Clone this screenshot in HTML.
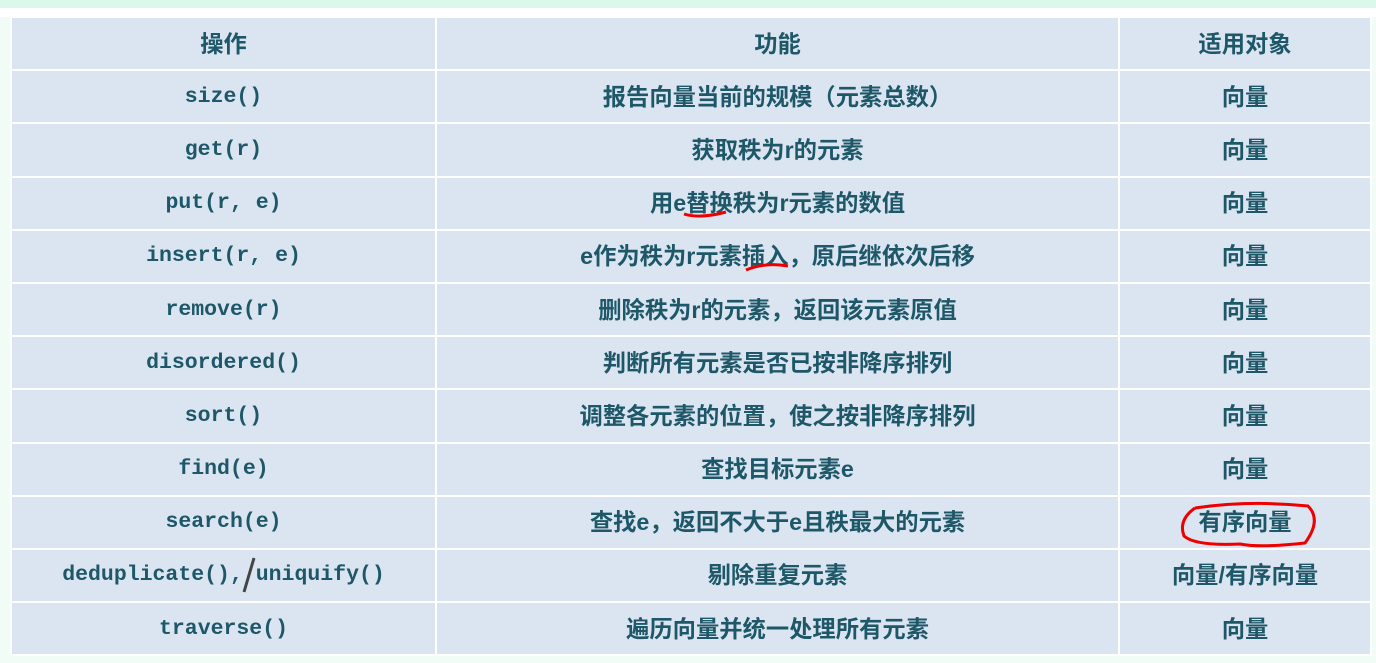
<!DOCTYPE html>
<html><head><meta charset="utf-8"><style>
body{margin:0;width:1376px;height:663px;background:#f2fcf7;position:relative;overflow:hidden;font-family:"Liberation Sans","Noto Sans CJK SC",sans-serif}
.top{position:absolute;left:0;top:0;width:1376px;height:8px;background:#dcf8ec}
.wh{position:absolute;left:0;top:8px;width:1376px;height:9px;background:#fff}
table{position:absolute;left:10px;top:16px;border-collapse:collapse;width:1362px;table-layout:fixed}
td{background:#dbe5f1;border:2px solid #fff;text-align:center;vertical-align:middle;color:#1e5868;font-weight:bold;font-size:23.3px;height:53.2px;line-height:24px;padding:0;box-sizing:border-box;white-space:nowrap}
td.m{font-family:"Liberation Mono","Noto Sans CJK SC",monospace;font-size:21.5px}
svg{position:absolute;left:0;top:0}
</style></head><body>
<div class="top"></div><div class="wh"></div>
<table>
<colgroup><col style="width:425px"><col style="width:683px"><col></colgroup>
<tr><td>操作</td><td>功能</td><td>适用对象</td></tr>
<tr><td class="m">size()</td><td>报告向量当前的规模（元素总数）</td><td>向量</td></tr>
<tr><td class="m">get(r)</td><td>获取秩为r的元素</td><td>向量</td></tr>
<tr><td class="m">put(r, e)</td><td>用e替换秩为r元素的数值</td><td>向量</td></tr>
<tr><td class="m">insert(r, e)</td><td>e作为秩为r元素插入，原后继依次后移</td><td>向量</td></tr>
<tr><td class="m">remove(r)</td><td>删除秩为r的元素，返回该元素原值</td><td>向量</td></tr>
<tr><td class="m">disordered()</td><td>判断所有元素是否已按非降序排列</td><td>向量</td></tr>
<tr><td class="m">sort()</td><td>调整各元素的位置，使之按非降序排列</td><td>向量</td></tr>
<tr><td class="m">find(e)</td><td>查找目标元素e</td><td>向量</td></tr>
<tr><td class="m">search(e)</td><td>查找e，返回不大于e且秩最大的元素</td><td>有序向量</td></tr>
<tr><td class="m">deduplicate(), uniquify()</td><td>剔除重复元素</td><td>向量/有序向量</td></tr>
<tr><td class="m">traverse()</td><td>遍历向量并统一处理所有元素</td><td>向量</td></tr>
</table>
<svg width="1376" height="663">
<path d="M684 214 Q700 219 726 212" stroke="#e00" stroke-width="3" fill="none"/>
<path d="M746 270 Q765 262 788 266" stroke="#e00" stroke-width="3" fill="none"/>
<path d="M1195 508 Q1250 500 1308 506 Q1322 520 1305 543 Q1260 548 1240 544 Q1195 546 1184 536 Q1178 520 1195 508" stroke="#e00" stroke-width="3" fill="none"/>
<path d="M244 592 L254 558" stroke="#444" stroke-width="3" fill="none"/>
</svg>
</body></html>
